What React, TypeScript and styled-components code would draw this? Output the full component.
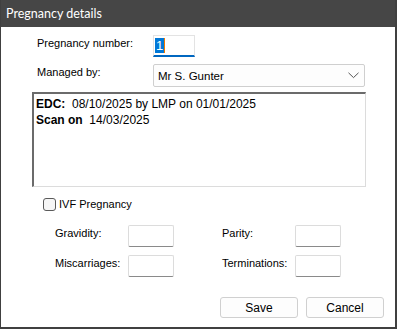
import React from "react";
import styled, { createGlobalStyle } from "styled-components";

const Global = createGlobalStyle`
  html, body { margin: 0; padding: 0; background: #ffffff; }
  * { box-sizing: border-box; }
`;

const Window = styled.div`
  width: 397px;
  height: 329px;
  display: flex;
  flex-direction: column;
  background: #ffffff;
  border-left: 1px solid #404040;
  border-right: 2px solid #404040;
  border-bottom: 2px solid #404040;
  font-family: "Liberation Sans", Arial, sans-serif;
  font-size: 11px;
  color: #000000;
`;

const TitleBar = styled.div`
  height: 27px;
  flex: none;
  background: #464646;
  color: #ffffff;
  font-family: Lato, "Noto Sans", sans-serif;
  font-size: 12.5px;
  display: flex;
  align-items: center;
  padding-left: 5px;
  padding-bottom: 1px;
`;

const Body = styled.div`
  flex: 1;
  display: flex;
  flex-direction: column;
  padding: 8px 0 0 30px;
`;

const FieldRow = styled.div<{ $gap?: number }>`
  display: flex;
  align-items: flex-start;
  height: 22px;
  margin-bottom: ${(p) => p.$gap ?? 0}px;
`;

const RowLabel = styled.label`
  width: 122px;
  padding-left: 6px;
  padding-top: 1px;
  line-height: 14px;
`;

const NumberInput = styled.div`
  width: 42px;
  height: 22px;
  border: 1px solid #e3e3e3;
  border-bottom: 2px solid #0067c0;
  background: #ffffff;
  display: flex;
  align-items: center;
  padding-left: 1px;
  font-size: 13px;
`;

const Selected = styled.span`
  background: #0078d7;
  color: #ffffff;
  padding: 0 1px;
  line-height: 15px;
  border-right: 1px solid #f07800;
`;

const Select = styled.div`
  width: 212px;
  height: 23px;
  border: 1px solid #cfcfcf;
  border-radius: 2px;
  background: #fdfdfd;
  display: flex;
  align-items: center;
  justify-content: space-between;
  padding: 0 5px 0 4px;
  font-size: 11.5px;
`;

const Memo = styled.div`
  width: 334px;
  height: 95px;
  margin-left: 1px;
  border-top: 2px solid #6b6b6b;
  border-left: 2px solid #6b6b6b;
  border-right: 1px solid #dcdcdc;
  border-bottom: 1px solid #dcdcdc;
  padding: 2px 2px;
  font-size: 12px;
  line-height: 16px;
`;

const MemoLine = styled.div`
  white-space: pre;
  b { font-weight: bold; }
`;

const CheckRow = styled.label`
  display: flex;
  align-items: center;
  gap: 3px;
  margin: 10px 0 0 12px;
  height: 14px;
`;

const CheckBox = styled.span`
  width: 13px;
  height: 13px;
  border: 1px solid #5a5a5a;
  border-radius: 3px;
  background: #f6f6f6;
`;

const CountsGrid = styled.div`
  display: grid;
  grid-template-columns: 73px 94px 73px 46px;
  grid-auto-rows: 22px;
  row-gap: 8px;
  margin: 14px 0 0 24px;
`;

const CountLabel = styled.span`
  line-height: 16px;
`;

const SmallBox = styled.div`
  width: 46px;
  height: 22px;
  border: 1px solid #dcdcdc;
  border-bottom: 1px solid #8a8a8a;
  border-radius: 2px;
  background: #ffffff;
`;

const ButtonBar = styled.div`
  display: flex;
  gap: 8px;
  margin: 20px 0 0 189px;
`;

const Button = styled.button`
  width: 78px;
  height: 21px;
  border: 1px solid #d0d0d0;
  border-radius: 3px;
  background: #fdfdfd;
  font-family: "Liberation Sans", Arial, sans-serif;
  font-size: 12px;
  color: #000000;
  padding: 0;
`;

const Chevron = () => (
  <svg width="11" height="7" viewBox="0 0 11 7">
    <path d="M0.5 0.8 L5.5 5.6 L10.5 0.8" fill="none" stroke="#555" strokeWidth="1" />
  </svg>
);

export default function App() {
  return (
    <>
      <Global />
      <Window>
        <TitleBar>Pregnancy details</TitleBar>
        <Body>
          <FieldRow $gap={7}>
            <RowLabel>Pregnancy number:</RowLabel>
            <NumberInput>
              <Selected>1</Selected>
            </NumberInput>
          </FieldRow>
          <FieldRow $gap={6}>
            <RowLabel>Managed by:</RowLabel>
            <Select>
              <span>Mr S. Gunter</span>
              <Chevron />
            </Select>
          </FieldRow>
          <Memo>
            <MemoLine>
              <b>EDC:</b>  08/10/2025 by LMP on 01/01/2025
            </MemoLine>
            <MemoLine>
              <b>Scan on</b>  14/03/2025
            </MemoLine>
          </Memo>
          <CheckRow>
            <CheckBox />
            <span>IVF Pregnancy</span>
          </CheckRow>
          <CountsGrid>
            <CountLabel>Gravidity:</CountLabel>
            <SmallBox />
            <CountLabel>Parity:</CountLabel>
            <SmallBox />
            <CountLabel>Miscarriages:</CountLabel>
            <SmallBox />
            <CountLabel>Terminations:</CountLabel>
            <SmallBox />
          </CountsGrid>
          <ButtonBar>
            <Button>Save</Button>
            <Button>Cancel</Button>
          </ButtonBar>
        </Body>
      </Window>
    </>
  );
}
